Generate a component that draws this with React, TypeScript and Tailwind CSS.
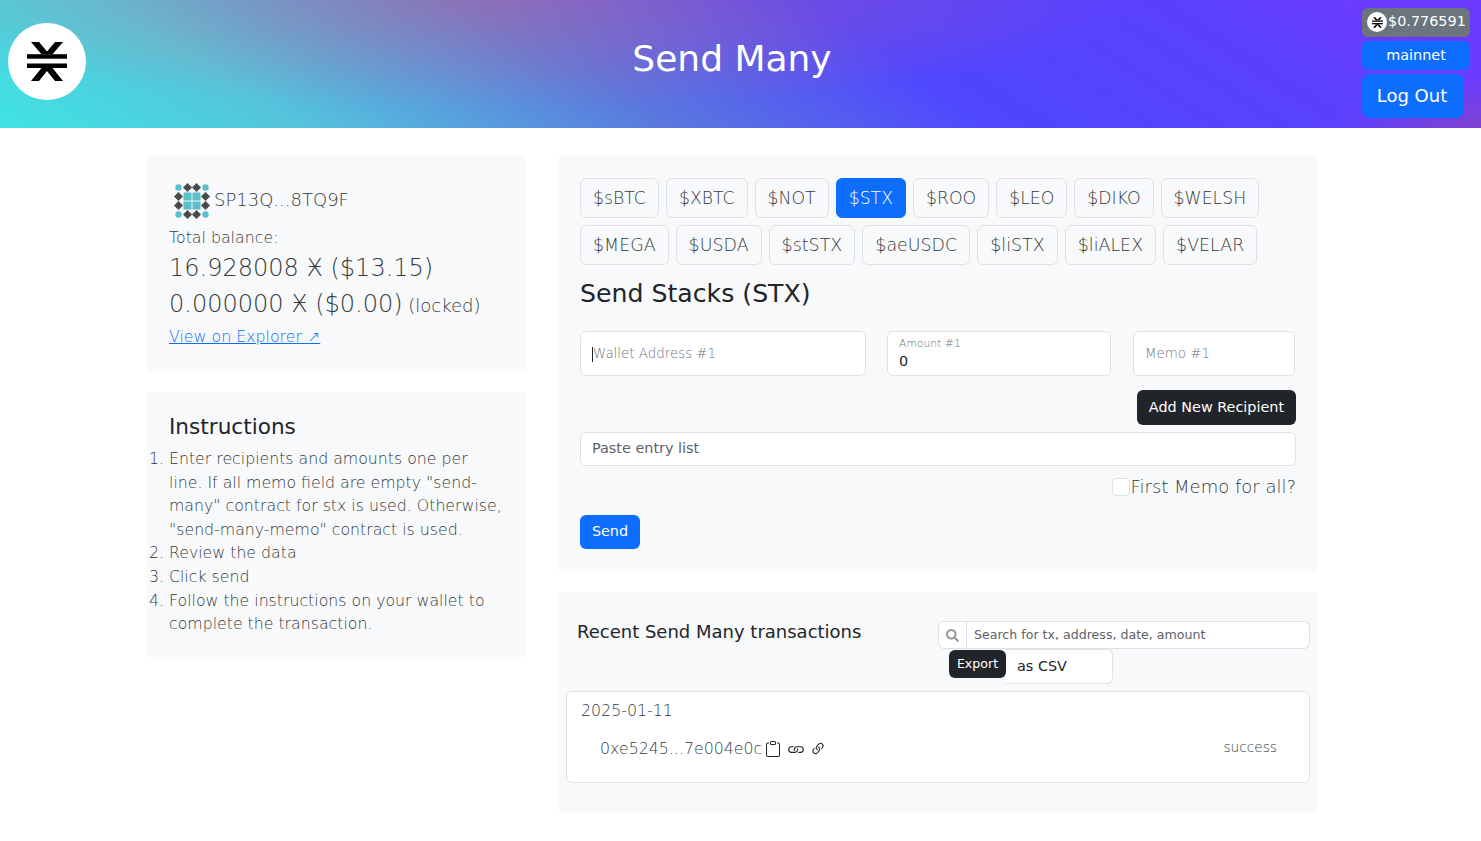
import { BsClipboard, BsLink, BsLink45Deg } from "react-icons/bs";
import { FaSearch } from "react-icons/fa";

const tokensRowOne = ["$sBTC", "$XBTC", "$NOT", "$STX", "$ROO", "$LEO", "$DIKO", "$WELSH"];
const tokensRowTwo = ["$MEGA", "$USDA", "$stSTX", "$aeUSDC", "$liSTX", "$liALEX", "$VELAR"];

const steps = [
  'Enter recipients and amounts one per line. If all memo field are empty "send-many" contract for stx is used. Otherwise, "send-many-memo" contract is used.',
  "Review the data",
  "Click send",
  "Follow the instructions on your wallet to complete the transaction.",
];

function StacksMark({ className }: { className?: string }) {
  return (
    <svg viewBox="0 0 40 39" className={className} fill="currentColor">
      <rect x="0" y="12.2" width="40" height="4.5" />
      <rect x="0" y="21.5" width="40" height="4.5" />
      <polygon points="4,0 12,0 20,9.5 28,0 36,0 25.5,12.2 14.5,12.2" />
      <polygon points="14.5,26 25.5,26 36,39 28,39 20,29 12,39 4,39" />
    </svg>
  );
}

function Identicon() {
  const dark = "#4a4a4a";
  const teal = "#5bbfcc";
  const diamond = (x: number, y: number) => (
    <polygon key={`${x}-${y}`} points={`${x + 4.5},${y} ${x + 9},${y + 4.5} ${x + 4.5},${y + 9} ${x},${y + 4.5}`} fill={dark} />
  );
  return (
    <svg viewBox="0 0 36 36" className="w-9 h-9 shrink-0">
      {[[4.5, 4.5], [31.5, 4.5], [4.5, 31.5], [31.5, 31.5]].map(([cx, cy]) => (
        <circle key={`${cx}-${cy}`} cx={cx} cy={cy} r="3.2" fill={teal} />
      ))}
      {[[9, 0], [18, 0], [0, 9], [27, 9], [0, 18], [27, 18], [9, 27], [18, 27]].map(([x, y]) => diamond(x, y))}
      {[[9.5, 9.5], [18.5, 9.5], [9.5, 18.5], [18.5, 18.5]].map(([x, y]) => (
        <rect key={`${x}-${y}`} x={x} y={y} width="8" height="8" fill={teal} />
      ))}
    </svg>
  );
}

function TokenButton({ label }: { label: string }) {
  const active = label === "$STX";
  return (
    <button
      className={
        active
          ? "h-10 px-3 pt-px rounded-md border border-[#0d6efd] bg-[#0d6efd] text-white font-extralight"
          : "h-10 px-3 pt-px rounded-md border border-[#dee2e6] text-[#343a40] font-extralight"
      }
    >
      {label}
    </button>
  );
}

export default function App() {
  return (
    <div className="min-h-[841px] bg-white text-[#212529] font-['DejaVu_Sans',sans-serif]">
      <header className="h-32 flex bg-[radial-gradient(ellipse_150px_50px_at_100%_100%,rgba(150,70,170,0.55),transparent),radial-gradient(ellipse_640px_110px_at_500px_0px,rgba(235,100,110,0.35),transparent),linear-gradient(33deg,#3fe3e3_0%,#55c4dc_18%,#5a78de_40%,#4f46ff_60%,#5a40ff_82%,#6a3cff_92%,#6a38ff_100%)]">
        <div className="w-[94px] pl-2 pt-[23px] shrink-0">
          <div className="w-[78px] h-[77px] rounded-full bg-white flex items-center justify-center">
            <StacksMark className="w-10 h-[39px] text-black" />
          </div>
        </div>
        <div className="flex-1 text-center pl-2">
          <h1 className="mt-[35px] text-[36px] leading-[47px] font-normal text-white">Send Many</h1>
        </div>
        <div className="w-[119px] pt-2 shrink-0 flex flex-col gap-1 text-white">
          <div className="w-[108px] h-[29px] pb-[2px] rounded-md bg-[#6c757d] flex items-center pl-[5px] gap-px text-[14.4px]">
            <span className="w-[20px] h-[20px] mt-[1px] rounded-full bg-white flex items-center justify-center">
              <StacksMark className="w-[11px] h-[11px] text-black" />
            </span>
            $0.776591
          </div>
          <div className="w-[108px] h-[29px] rounded-md bg-[#0d6efd] flex items-center justify-center text-[14.4px]">mainnet</div>
          <button className="w-[102px] h-[44px] pb-[2px] pr-[2px] rounded-lg bg-[#0d6efd] text-[18px]">Log Out</button>
        </div>
      </header>

      <div className="w-[1464px] flex justify-center">
        <main className="w-[1170px] pt-7 flex gap-[33px] font-extralight">
          <div className="w-[379px] shrink-0 flex flex-col gap-[21px]">
            <section className="h-[215px] bg-[#f8f9fa] pl-[22px] pt-[27px] text-[#343a40]">
              <div className="flex items-center pl-[5px] gap-[4px] text-[18px]">
                <Identicon />
                <span className="mb-[3px]">SP13Q...8TQ9F</span>
              </div>
              <div className="mt-[7px] text-[15.8px] leading-6">Total balance:</div>
              <div className="text-[24px] leading-[36px]">16.928008 Ӿ ($13.15)</div>
              <div className="text-[24px] leading-[36px]">
                0.000000 Ӿ ($0.00) <span className="ml-[-2px] text-[18px]">(locked)</span>
              </div>
              <a className="block mt-px text-[15.8px] leading-6 text-[#0d6efd] underline">View on Explorer ↗</a>
            </section>

            <section className="h-[265px] bg-[#f8f9fa] pl-[22px] pr-[20px] pt-5 text-[#343a40]">
              <h2 className="text-[21.6px] leading-[30px] font-normal text-[#212529]">Instructions</h2>
              <ol className="list-decimal mt-[5px] text-[15.75px] leading-[23.6px]">
                {steps.map((step) => (
                  <li key={step}>{step}</li>
                ))}
              </ol>
            </section>
          </div>

          <div className="w-[758px] shrink-0 flex flex-col gap-[21px]">
            <section className="h-[415px] bg-[#f8f9fa] px-[21px] pt-[22px]">
              <div className="flex gap-[7px] text-[17.28px]">
                {tokensRowOne.map((token) => (
                  <TokenButton key={token} label={token} />
                ))}
              </div>
              <div className="flex gap-[7px] mt-[7px] text-[17.45px]">
                {tokensRowTwo.map((token) => (
                  <TokenButton key={token} label={token} />
                ))}
              </div>
              <h2 className="mt-[11px] text-[25.2px] leading-[36px] font-normal">Send Stacks (STX)</h2>
              <div className="mt-[19px] flex gap-[21px] text-[13.4px]">
                <div className="w-[286px] h-[45px] pt-px rounded-md border border-[#dee2e6] bg-white flex items-center pl-[11px] text-[#6c757d]">
                  <span className="w-px h-[15px] bg-[#212529]" />
                  Wallet Address #1
                </div>
                <div className="w-[224px] h-[45px] rounded-md border border-[#dee2e6] bg-white pl-[11px] pt-[5px]">
                  <div className="text-[10.8px] leading-[14px] text-[#6c757d]">Amount #1</div>
                  <div className="text-[14.4px] leading-[20px] font-normal">0</div>
                </div>
                <div className="w-[162px] h-[45px] ml-px pt-px rounded-md border border-[#dee2e6] bg-white flex items-center pl-[11px] text-[#6c757d]">Memo #1</div>
              </div>
              <div className="mt-[14px] flex justify-end">
                <button className="w-[159px] h-[35px] rounded-md bg-[#212529] text-white text-[14.4px] font-normal">Add New Recipient</button>
              </div>
              <div className="mt-[7px] w-[716px] h-[34px] pb-px rounded-md border border-[#dee2e6] bg-white flex items-center pl-[11px] text-[14.4px] font-normal text-[#5c636a]">
                Paste entry list
              </div>
              <label className="mt-[11px] flex justify-end items-center text-[18px] leading-[20px] text-[#343a40]">
                <span className="w-[18px] h-[18px] rounded border border-[#dee2e6] bg-white" />
                First Memo for all?
              </label>
              <button className="mt-[18px] block w-[60px] h-[34px] pb-px rounded-md bg-[#0d6efd] text-white text-[14.4px] font-normal">Send</button>
            </section>

            <section className="h-[220px] bg-[#f8f9fa] px-[7px] pt-[29px]">
              <div className="flex justify-between h-[70px]">
                <h3 className="pl-[11px] text-[18px] leading-[22px] font-normal">Recent Send Many transactions</h3>
                <div className="w-[372px]">
                  <div className="flex h-7 text-[12.6px] font-normal">
                    <span className="w-[29px] rounded-l-md border border-[#dee2e6] bg-white flex items-center justify-center text-[#9a9a9a]">
                      <FaSearch className="w-[13px] h-[13px]" />
                    </span>
                    <div className="flex-1 rounded-r-md border border-[#dee2e6] border-l-0 bg-white flex items-center pl-[7px] text-[#5c636a]">
                      Search for tx, address, date, amount
                    </div>
                  </div>
                  <div className="flex pl-[11px] text-[12.6px] font-normal">
                    <button className="w-[57px] h-7 mt-px rounded-md bg-[#212529] text-white">Export</button>
                    <div className="w-[107px] h-[35px] rounded-r-md border border-[#dee2e6] border-l-0 bg-white flex items-center pl-[11px] text-[14.4px]">as CSV</div>
                  </div>
                </div>
              </div>
              <div className="h-[92px] rounded-md border border-[#dee2e6] bg-white pl-[14px] pt-[7px] text-[#343a40]">
                <div className="text-[15.8px] leading-6">2025-01-11</div>
                <div className="mt-[14px] pl-[19px] pr-[32px] flex items-center text-[15.8px]">
                  0xe5245...7e004e0c
                  <BsClipboard className="ml-[3px] w-4 h-4 text-[#212529]" />
                  <BsLink className="ml-[6px] w-[18px] h-[18px] text-[#212529]" />
                  <BsLink45Deg className="ml-[5px] w-4 h-4 text-[#212529]" />
                  <span className="ml-auto mb-[3px] text-[13.7px]">success</span>
                </div>
              </div>
            </section>
          </div>
        </main>
      </div>
    </div>
  );
}
